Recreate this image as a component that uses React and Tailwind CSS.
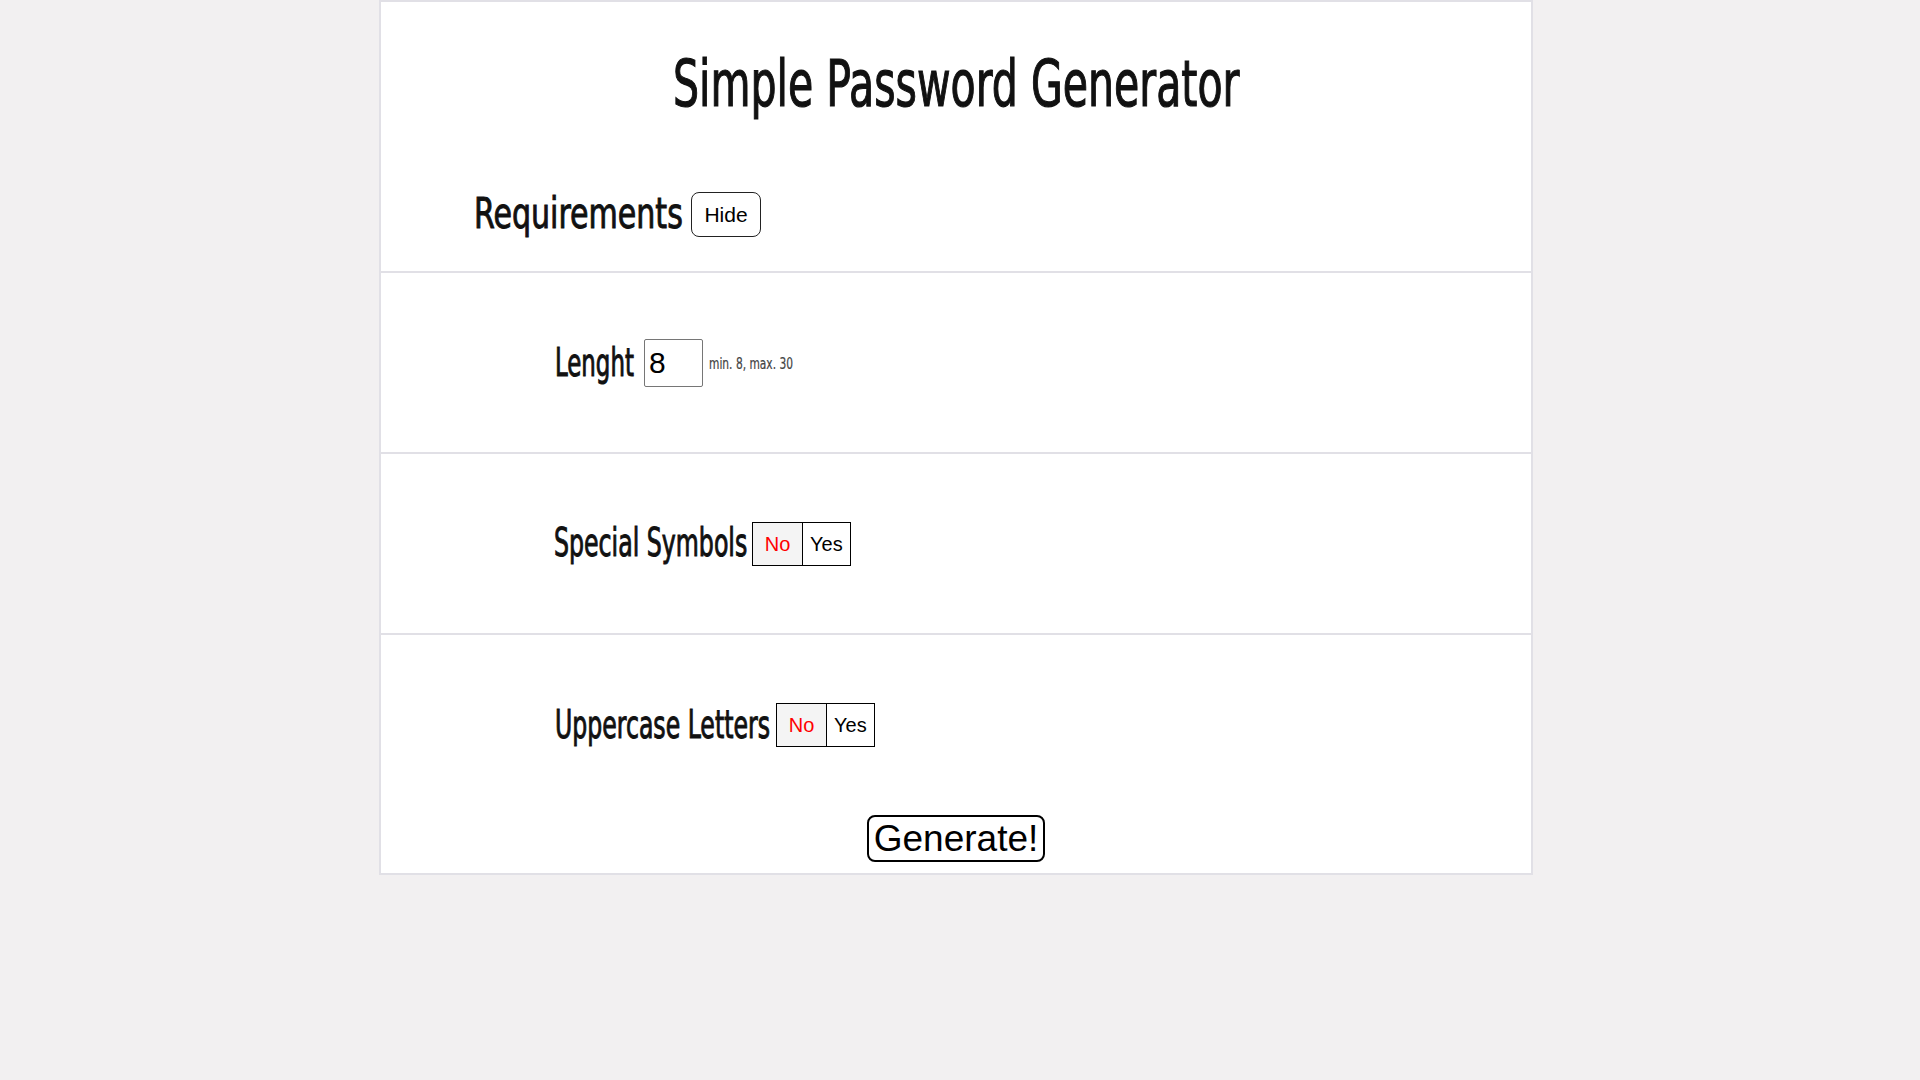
import React from "react";

const cond = "font-['DejaVu_Sans_Condensed','DejaVu_Sans',sans-serif]";
const arial = "font-['Liberation_Sans',Arial,sans-serif]";

function Toggle() {
  return (
    <div className={`flex ${arial} text-[20px] leading-none`}>
      <div className="w-[51px] h-[44px] border border-black bg-[#f4f4f4] text-[#ff0000] flex items-center justify-center">
        No
      </div>
      <div className="w-[48px] h-[44px] border-y border-r border-black bg-white text-black flex items-center pl-[7px]">
        Yes
      </div>
    </div>
  );
}

export default function App() {
  return (
    <div className="min-h-screen bg-[#f2f0f1]">
      <div className="ml-[379px] w-[1154px] border-2 border-[#e1e0e6] bg-white">
        {/* Header */}
        <div className="h-[271px] border-b-2 border-[#e1e0e6] pt-[55px]">
          <h1 className={`${cond} font-normal text-[55px] leading-none text-center text-[#111] [-webkit-text-stroke:1px_#111]`}>
            <span className="inline-block whitespace-nowrap scale-x-[0.83] scale-y-[1.17]">
              Simple Password Generator
            </span>
          </h1>
          <div className="mt-[80px] flex items-center pl-[93px] h-[45px]">
            <span className="inline-block w-[211px] whitespace-nowrap">
              <span className={`${cond} text-[41px] leading-none text-[#111] [-webkit-text-stroke:0.9px_#111] inline-block origin-left scale-x-[0.815] scale-y-[1.02]`}>
                Requirements
              </span>
            </span>
            <button className={`ml-[6px] w-[70px] h-[45px] rounded-[8px] border border-[#222] bg-white ${arial} text-[21px] leading-none text-black`}>
              Hide
            </button>
          </div>
        </div>

        {/* Length */}
        <div className="h-[181px] border-b-2 border-[#e1e0e6] flex items-center pl-[174px]">
          <span className="inline-block w-[80px] whitespace-nowrap">
            <span className={`${cond} text-[31px] leading-none text-[#111] [-webkit-text-stroke:0.8px_#111] inline-block origin-left scale-x-[0.82] scale-y-[1.28]`}>
              Lenght
            </span>
          </span>
          <div className={`ml-[9px] w-[59px] h-[48px] border border-[#767676] rounded-[2px] flex items-center pl-[4px] ${arial} text-[30px] leading-none text-black`}>
            8
          </div>
          <span className="ml-[6px] inline-block w-[88px] whitespace-nowrap">
            <span className={`${cond} text-[15px] leading-none text-[#444] [-webkit-text-stroke:0.2px_#444] inline-block origin-left scale-x-[0.79] scale-y-[1.1]`}>
              min. 8, max. 30
            </span>
          </span>
        </div>

        {/* Special symbols */}
        <div className="h-[181px] border-b-2 border-[#e1e0e6] flex items-center pl-[173px]">
          <span className="inline-block w-[198px] whitespace-nowrap">
            <span className={`${cond} text-[31.7px] leading-none text-[#111] [-webkit-text-stroke:0.8px_#111] inline-block origin-left scale-x-[0.83] scale-y-[1.21]`}>
              Special Symbols
            </span>
          </span>
          <Toggle />
        </div>

        {/* Uppercase + generate */}
        <div className="h-[238px] pt-[68px] flex flex-col">
          <div className="flex items-center pl-[174px] h-[44px]">
            <span className="inline-block w-[221px] whitespace-nowrap">
              <span className={`${cond} text-[32px] leading-none text-[#111] [-webkit-text-stroke:0.8px_#111] inline-block origin-left scale-x-[0.82] scale-y-[1.21]`}>
                Uppercase Letters
              </span>
            </span>
            <Toggle />
          </div>
          <div className="mt-[68px] flex justify-center">
            <button className={`w-[178px] h-[47px] border-2 border-black rounded-[8px] bg-white ${arial} text-[37px] leading-none text-black`}>
              Generate!
            </button>
          </div>
        </div>
      </div>
    </div>
  );
}
